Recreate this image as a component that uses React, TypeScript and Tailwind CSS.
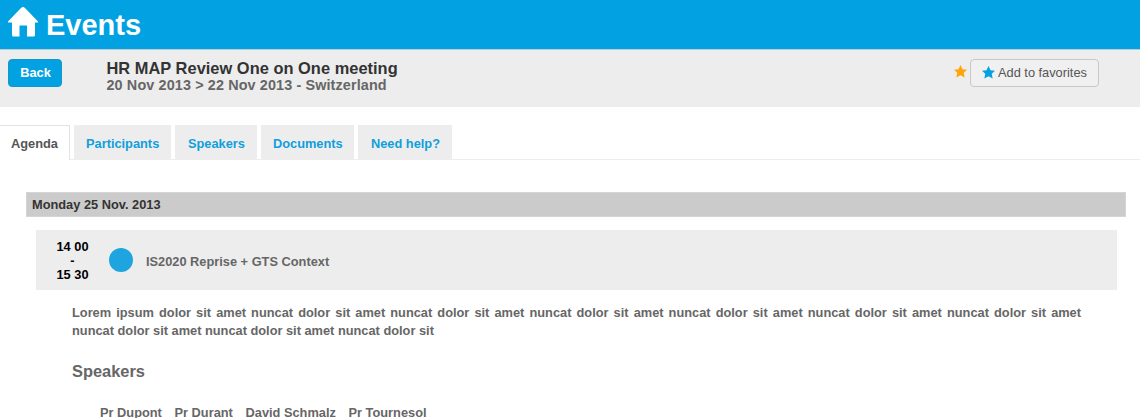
const tabs = [
  { label: "Agenda", width: "w-[70px]", pad: "pl-[11px]" },
  { label: "Participants", width: "w-[97px]", pad: "pl-3" },
  { label: "Speakers", width: "w-[82px]", pad: "pl-[13px]" },
  { label: "Documents", width: "w-[93px]", pad: "pl-3" },
  { label: "Need help?", width: "w-[94px]", pad: "pl-[13px]" },
];

const speakers = ["Pr Dupont", "Pr Durant", "David Schmalz", "Pr Tournesol"];

function Star({ className }: { className: string }) {
  return (
    <svg viewBox="0 0 26 26" className={className} fill="currentColor">
      <path d="M13 0l4 8.400 9 1-6.500 6.300 1.800 9.300L13 20.500l-8.300 4.500 1.800-9.300L0 9.400l9-1z" />
    </svg>
  );
}

export default function App() {
  return (
    <div className="h-[418px] w-full overflow-hidden bg-white font-['Liberation_Sans',Arial,sans-serif] text-[12.8px] font-bold whitespace-nowrap text-[#666]">
      <header className="flex h-[50px] items-start border-b border-[#b9cdd6] bg-[#02a2e2] pl-2 text-white">
        <svg viewBox="0 0 30 30" className="mt-[7px] h-[30px] w-[30px]" fill="currentColor">
          <path d="M15 0Q16 0 17 1L30 14.500q.3 1-.7 1H27V28q0 1.500-1.500 1.500H19V18.500H11.500V29.500H5.500Q4 29.500 4 28V15.500H.7Q-.3 15.500 0 14.500L13 1Q14 0 15 0Z" />
        </svg>
        <h1 className="mt-[5px] ml-2 text-[29px] leading-10">Events</h1>
      </header>

      <section className="flex h-[57px] items-start bg-[#ededed] pl-2">
        <button className="mt-[9px] h-7 w-[54px] rounded border border-[#1497cb] bg-[#02a2e2] pl-px text-white">
          Back
        </button>
        <div className="mt-2 ml-[44.5px]">
          <h2 className="text-[16.4px] leading-5 tracking-[0.03px] text-[#333]">HR MAP Review One on One meeting</h2>
          <p className="-mt-px text-[14.4px] leading-4 tracking-[0.12px]">20 Nov 2013 &gt; 22 Nov 2013 - Switzerland</p>
        </div>
        <div className="mt-[9px] mr-[41px] ml-auto flex items-start">
          <Star className="mt-1.5 mr-[3.5px] h-[13px] w-[13px] text-[#ffa50a]" />
          <button className="flex h-7 w-[129px] items-center rounded border border-[#c8c8c8] bg-[#f0f0f0] pl-[11px] text-[12.8px] font-normal text-[#555]">
            <Star className="mr-[3px] mb-px h-[13px] w-[13px] text-[#02a2e2]" />
            Add to favorites
          </button>
        </div>
      </section>

      <nav className="mt-[18px] flex h-[35px] gap-1 border-b border-[#ededed]">
        {tabs.map((tab, i) => (
          <a
            key={tab.label}
            className={`${tab.width} ${tab.pad} leading-5 ${
              i === 0
                ? "h-[35px] border-t border-r border-[#e2e2e2] bg-white pt-2 text-[#555]"
                : "h-[34px] bg-[#ededed] pt-[9px] text-[#109fdb]"
            }`}
          >
            {tab.label}
          </a>
        ))}
      </nav>

      <main className="pt-8 pr-[14px] pl-[26px]">
        <h3 className="h-[25px] border border-[#d5d5d5] bg-[#cbcbcb] pl-[5px] leading-[23px] text-[#333]">
          Monday 25 Nov. 2013
        </h3>
        <div className="mt-[13px] mr-[9px] ml-[10px] flex h-[60px] items-center bg-[#ededed]">
          <div className="w-[73px] pt-0.5 text-center leading-[14px] text-black">
            14 00
            <br />-<br />
            15 30
          </div>
          <span className="h-6 w-6 rounded-full bg-[#1ea4df]" />
          <span className="ml-[13px] pt-[3px]">IS2020 Reprise + GTS Context</span>
        </div>
        <div className="mt-[14px] ml-[46px]">
          <div className="w-[1009px] leading-[18px]">
            <p className="[text-align-last:justify]">
              Lorem ipsum dolor sit amet nuncat dolor sit amet nuncat dolor sit amet nuncat dolor sit amet nuncat dolor sit amet nuncat dolor sit amet nuncat dolor sit amet
            </p>
            <p>nuncat dolor sit amet nuncat dolor sit amet nuncat dolor sit</p>
          </div>
          <h4 className="mt-[21px] text-[16.4px] leading-5">Speakers</h4>
          <ul className="mt-[22px] ml-[28px] flex gap-[12.7px] leading-5">
            {speakers.map((name) => (
              <li key={name}>{name}</li>
            ))}
          </ul>
        </div>
      </main>
    </div>
  );
}
